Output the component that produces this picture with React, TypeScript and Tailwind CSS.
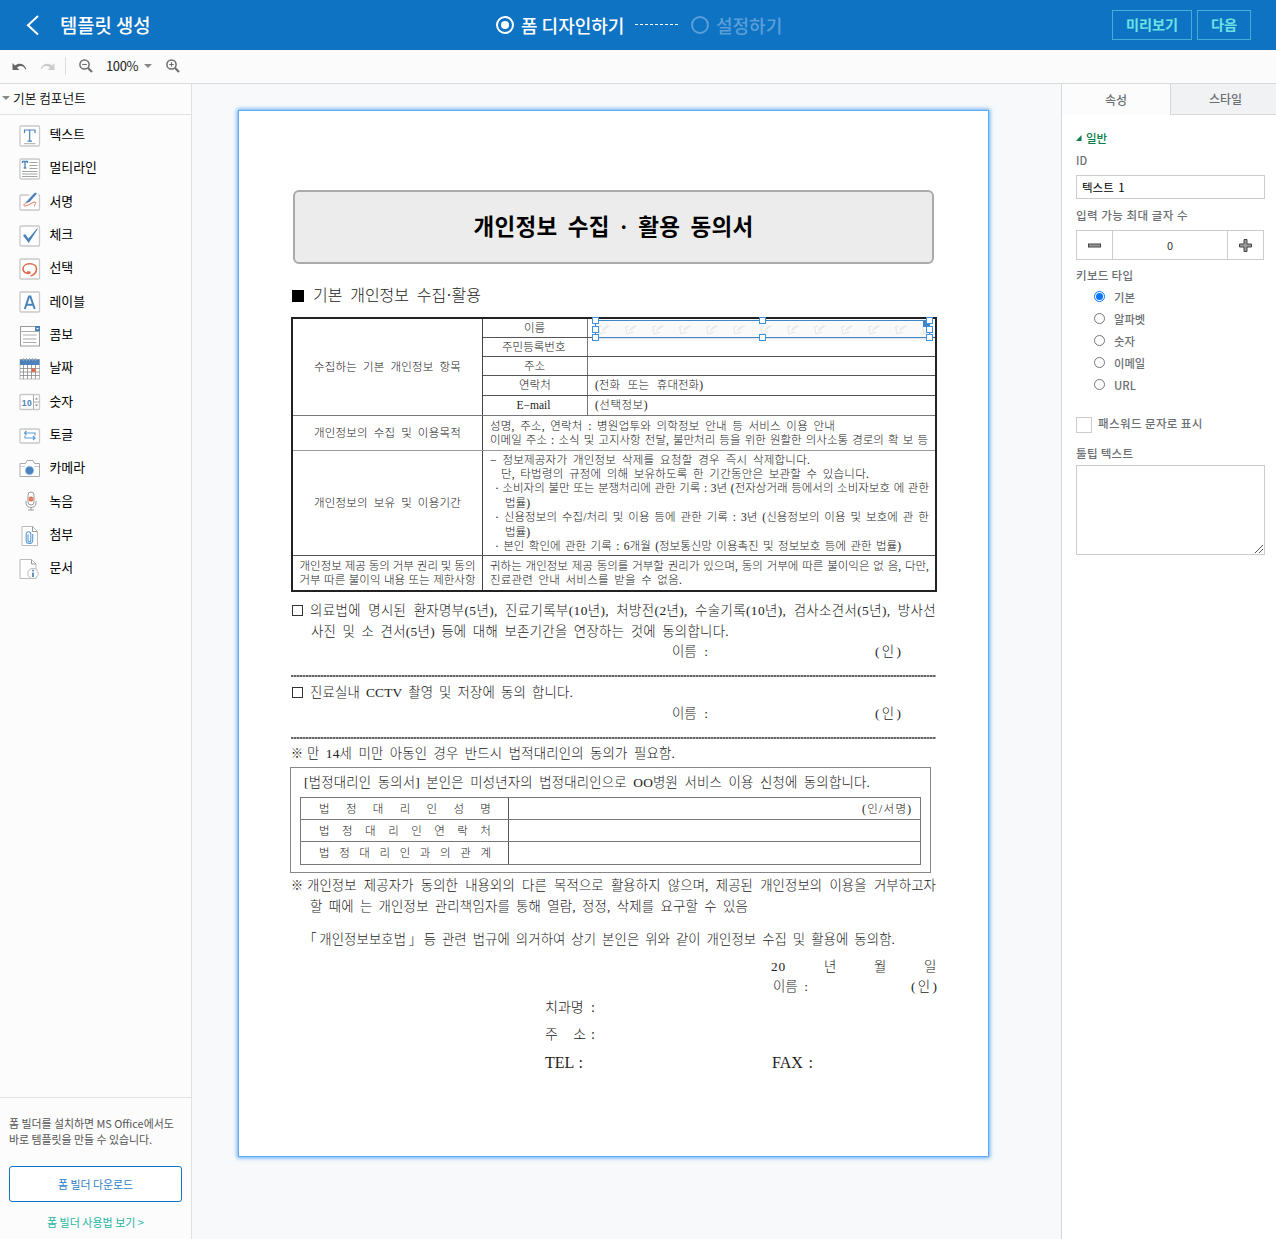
import type { ReactNode } from "react";

const BLUE = "#4a82bb";
const RED = "#df6b4d";
const GRAY = "#c9c9c9";

function Frame({ y = 1, h = 20 }: { y?: number; h?: number }) {
  return <rect x="1" y={y} width="19.5" height={h} rx="1" fill="#fff" stroke={GRAY} strokeWidth="1.3" />;
}

const components: { name: string; icon: ReactNode }[] = [
  {
    name: "텍스트",
    icon: (
      <>
        <Frame />
        <path d="M5.500 8V5h10.500v3M10.700 5v11M8.500 16.200h4.500" fill="none" stroke={BLUE} strokeWidth="1.200" />
        <path d="M5 18.700h11.500" stroke="#aaa" />
      </>
    ),
  },
  {
    name: "멀티라인",
    icon: (
      <>
        <Frame />
        <path d="M3.500 5V3.500h5V5M6 3.500v6.500M4.700 10h2.600" fill="none" stroke={BLUE} strokeWidth="1.300" />
        <path d="M10.500 4.500h8M10.500 7.500h8M10.500 10.500h8M3 13.500h15.500M3 16h15.500M3 18.500h15.500" stroke="#999" strokeWidth="0.900" />
      </>
    ),
  },
  {
    name: "서명",
    icon: (
      <>
        <Frame y={4} h={15} />
        <path d="M10 4h9" stroke="#fcfcfc" strokeWidth="1.600" />
        <path d="M7.500 10.500 16 1.500 18 2.500 11 10.500 6.500 12.500Z" fill={BLUE} />
        <path d="M8 11.500c-3 1-4 3-2.500 3.500 3 .500 8-4 10.500-4 2.500.500-2 3.500 0 4.500" fill="none" stroke={RED} strokeWidth="0.900" />
      </>
    ),
  },
  {
    name: "체크",
    icon: (
      <>
        <Frame />
        <path d="M4 10.500 6 9l3.500 4.500L18 3.500h1L9.700 18Z" fill={BLUE} />
      </>
    ),
  },
  {
    name: "선택",
    icon: (
      <>
        <Frame />
        <path d="M9.500 15.500C5.800 15.200 4 13 4 10.800 4 7.500 7.500 5.800 11 5.800s6.500 2 6.500 5.200c0 3-2.500 5.800-6 7M9.500 15.500c1.500 0 1.800-1 .800-1.500H8" fill="none" stroke={RED} strokeWidth="1.600" />
      </>
    ),
  },
  {
    name: "레이블",
    icon: (
      <>
        <Frame />
        <path d="M5.800 18 10 5.500h1.400L15.700 18M7.300 13.700h7" fill="none" stroke={BLUE} strokeWidth="2" />
      </>
    ),
  },
  {
    name: "콤보",
    icon: (
      <>
        <rect x="1.500" y="1.500" width="19" height="19.500" fill="#fff" stroke="#999" />
        <path d="M1.500 6.500H20M4 10h13.500M4 14h13.500M4 17.500h13.500" stroke="#aaa" />
        <rect x="16" y="1" width="5" height="5" fill={BLUE} />
        <path d="m17 3 1.500 1.500L20 3" fill="#fff" />
      </>
    ),
  },
  {
    name: "날짜",
    icon: (
      <>
        <rect x="1" y="1.500" width="19.500" height="19.500" fill="#fff" stroke="#bbb" />
        <rect x="1" y="1.500" width="19.500" height="5.500" fill={BLUE} />
        <path d="M4.500 0v3M7.500 0v3M10.500 0v3M13.500 0v3M16.500 0v3" stroke="#aaa" strokeWidth="0.800" />
        <path d="M1 10.500h19.500M1 14h19.500M1 17.500h19.500M4.500 7v14M8.500 7v14M12.500 7v14M16.500 7v14" stroke="#888" strokeWidth="0.800" />
        <rect x="12.500" y="10.500" width="4" height="3.500" fill={RED} />
      </>
    ),
  },
  {
    name: "숫자",
    icon: (
      <>
        <Frame y={3.500} h={15} />
        <path d="M14.500 4v14M14.500 11H20" stroke="#aaa" />
        <text x="2.800" y="14.800" className="font-['Liberation_Sans',sans-serif] text-[8.500px] font-bold tracking-[0.400px]" fill={BLUE}>
          10
        </text>
        <path d="m16 8.500 1.500-2 1.500 2ZM16 13.500l1.500 2 1.500-2Z" fill="#888" />
      </>
    ),
  },
  {
    name: "토글",
    icon: (
      <>
        <Frame y={4} h={14} />
        <path d="M7.500 6 5.500 8l2 2M5.500 8H16v2.500M14 11l2 2-2 2M16 13H6v-2.500" fill="none" stroke="#5b9bd5" strokeWidth="1.100" />
      </>
    ),
  },
  {
    name: "카메라",
    icon: (
      <>
        <path d="M1 5.500h5.500L8 2.500h6l1.500 3h5V18.500H1Z" fill="#fff" stroke="#aaa" />
        <path d="M2 8.500h4M15 8.500h5" stroke="#ccc" />
        <circle cx="10.500" cy="12.500" r="4.200" fill={BLUE} stroke="#9fc3e6" />
      </>
    ),
  },
  {
    name: "녹음",
    icon: (
      <>
        <rect x="9" y="1" width="6" height="13" rx="3" fill="#fff" stroke="#999" />
        <path d="M7 10v2c0 6 10 6 10 0v-2M12 16v3M9 19h6" fill="none" stroke="#999" />
        <circle cx="12" cy="8" r="2.500" fill={RED} />
        <path d="M9.500 8h5" stroke="#f4b7a6" strokeWidth="0.700" />
      </>
    ),
  },
  {
    name: "첨부",
    icon: (
      <>
        <path d="M3 1.500h10.500l5 5V20.500H3Z" fill="#fff" stroke="#bbb" />
        <path d="M13.500 1.500v5h5" fill="none" stroke="#999" />
        <path d="M9 9.500v6c0 1.800 2.800 1.800 2.800 0V9c0-3-4.600-3-4.600 0v6.500c0 4 6.500 4 6.500 0V9" fill="none" stroke="#5b9bd5" strokeWidth="1.100" />
      </>
    ),
  },
  {
    name: "문서",
    icon: (
      <>
        <path d="M1 1.500h11.500l4.500 4.500V20.500H1Z" fill="#fff" stroke="#bbb" />
        <path d="M12.500 1.500V6H17" fill="none" stroke="#999" />
        <circle cx="14" cy="15.500" r="5.200" fill="#fff" stroke="#bbb" />
        <path d="M14 14.500v4.500" stroke={BLUE} strokeWidth="1.700" />
        <circle cx="14" cy="12.500" r="0.900" fill={BLUE} />
      </>
    ),
  },
];

/* One typeset line, spread over the width given in className. */
function L({ className, children }: { className: string; children: ReactNode }) {
  return (
    <div className={"shrink-0 whitespace-nowrap text-justify [text-align-last:justify] " + className}>{children}</div>
  );
}

function Chars({ text }: { text: string }) {
  return (
    <div className="flex w-[172px] justify-between">
      {text.split("").map((c, i) => (
        <span key={i}>{c}</span>
      ))}
    </div>
  );
}

function TopBar() {
  return (
    <header className="flex h-[50px] shrink-0 items-center bg-[#0f73c4] pb-px text-white">
      <div className="flex w-[496px] items-center">
        <svg className="ml-[26px]" width="14" height="20" viewBox="0 0 14 20">
          <path d="M12 1 2 10.200 12 19.500" fill="none" stroke="#fff" strokeWidth="2" />
        </svg>
        <h1 className="ml-5 text-[18.800px] leading-6 font-medium">템플릿 생성</h1>
      </div>
      <div className="flex items-center text-[18px] leading-6 font-medium">
        <span className="mt-px flex size-[18px] items-center justify-center rounded-full border-2 border-white">
          <span className="size-2 rounded-full bg-white" />
        </span>
        <span className="ml-[7px] w-[105px] whitespace-nowrap">폼 디자인하기</span>
        <span className="ml-[9px] h-px w-[45px] bg-[repeating-linear-gradient(90deg,#fff_0_3px,transparent_3px_5px)]" />
        <span className="mt-px ml-[11px] size-[18px] rounded-full border-2 border-[#5b9fd8]" />
        <span className="ml-[7px] text-[#5b9fd8]">설정하기</span>
      </div>
      <div className="mr-[25px] ml-auto flex gap-[5px] text-[14.200px] font-bold text-[#6be3e4]">
        <button className="h-[30px] w-20 border border-[#45aed6]">미리보기</button>
        <button className="h-[30px] w-[54px] border border-[#45aed6]">다음</button>
      </div>
    </header>
  );
}

function Magnifier({ plus }: { plus?: boolean }) {
  return (
    <svg width="14" height="14" viewBox="0 0 14 14" fill="none" stroke="#6d6d6d">
      <circle cx="5.500" cy="5.500" r="4.600" strokeWidth="1.500" />
      <path d="m9 9 4 4" strokeWidth="2.200" />
      <path d={plus ? "M3.200 5.500h4.600M5.500 3.200v4.600" : "M3.200 5.500h4.600"} strokeWidth="1.100" />
    </svg>
  );
}

function UndoArrow({ className }: { className: string }) {
  return (
    <svg className={className} width="15" height="9" viewBox="0 0 15 9">
      <path d="M.500 1v7h7L5 5.700C8 3 11.500 3.500 13.500 7.500l.800-.500C12.500 1.500 7 .500 3 3.500Z" fill="currentColor" />
    </svg>
  );
}

function ToolBar() {
  return (
    <div className="flex h-[34px] shrink-0 items-center border-b border-[#d9dbdd] bg-[#fbfbfb] pb-px">
      <UndoArrow className="ml-3 text-[#666]" />
      <UndoArrow className="ml-[13px] -scale-x-100 text-[#ccc]" />
      <span className="ml-[10px] h-[18px] w-px bg-[#dcdcdc]" />
      <span className="ml-[13px]"><Magnifier /></span>
      <span className="ml-[13px] w-[33px] text-[13px] tracking-[-0.400px] text-[#222]">100%</span>
      <span className="ml-[5px] border-x-4 border-t-4 border-x-transparent border-t-[#888]" />
      <span className="ml-[14px]"><Magnifier plus /></span>
    </div>
  );
}

function SideBar() {
  return (
    <aside className="flex w-48 shrink-0 flex-col border-r border-[#dfe1e3] bg-[#fcfcfc]">
      <div className="flex h-[31px] items-center border-b border-[#dfe1e3] pb-0.5 pl-[2px] text-[12.700px] font-[350] text-black">
        <span className="mr-[3px] border-x-4 border-t-4 border-x-transparent border-t-[#888]" />
        기본 컴포넌트
      </div>
      <ul className="mt-[3px]">
        {components.map((c) => (
          <li key={c.name} className="flex h-[33.340px] items-center pl-[18.500px]">
            <svg className="mt-[2px] shrink-0" width="22" height="22" viewBox="0 0 22 22">{c.icon}</svg>
            <span className="mb-px ml-[9px] text-[12.900px] leading-5 text-black">{c.name}</span>
          </li>
        ))}
      </ul>
      <div className="mt-auto h-[142px] border-t border-[#dfe1e3] px-[9px] pt-[17px] text-[11px]">
        <p className="text-[10.900px] leading-4 whitespace-nowrap text-[#555]">
          폼 빌더를 설치하면 MS Office에서도
          <br />
          바로 템플릿을 만들 수 있습니다.
        </p>
        <button className="mt-[19px] block h-9 w-[173px] rounded-[3px] border border-[#0f73c4] bg-white text-[10.900px] text-[#2e80c8]">
          폼 빌더 다운로드
        </button>
        <a className="mt-[12px] block text-center leading-4 text-[#1fb5a3]">폼 빌더 사용법 보기 &gt;</a>
      </div>
    </aside>
  );
}

const handlePlaces = [
  "-left-[4px] -top-[4px]",
  "left-[163px] -top-[4px]",
  "-right-[4px] -top-[4px]",
  "-left-[4px] top-[5px]",
  "-right-[4px] top-[5px]",
  "-left-[4px] -bottom-[4px]",
  "left-[163px] -bottom-[4px]",
  "-right-[4px] -bottom-[4px]",
];

function SelectedField() {
  return (
    <div className="absolute top-[1px] left-[7px] h-[18px] w-[335px] border border-[#3e88c8] bg-[#fafafa] shadow-sm">
      <div className="flex h-full gap-[13px] overflow-hidden pl-[1px]">
        {Array.from({ length: 13 }, (_, i) => (
          <svg key={i} className="mt-px shrink-0" width="14" height="14" viewBox="0 0 14 14" fill="none" stroke="#e4e4e4">
            <path d="M5 4 1.500 5 3 12l6-2M5 9l8-5.500M6 7l5-3.500" />
          </svg>
        ))}
      </div>
      <span className="absolute top-0 right-0 size-[6px] bg-[#3e88c8]" />
      {handlePlaces.map((p) => (
        <span key={p} className={"absolute size-[7px] border border-[#3e93dc] bg-white " + p} />
      ))}
    </div>
  );
}

const personalRows: { label: string; width: string; height: string; value?: ReactNode }[] = [
  { label: "이름", width: "w-[22px]", height: "h-[18px]", value: <SelectedField /> },
  { label: "주민등록번호", width: "w-[66px]", height: "h-[19px]" },
  { label: "주소", width: "w-[22px]", height: "h-[19px]" },
  { label: "연락처", width: "w-[32px]", height: "h-[20px]", value: <L className="w-[108px]">(전화 또는 휴대전화)</L> },
  { label: "E−mail", width: "w-[37px]", height: "h-[20px]", value: <L className="w-[54px] tracking-[0.500px]">(선택정보)</L> },
];

function ItemTable() {
  const head = "flex w-[190px] shrink-0 flex-col items-center justify-center border-r border-[#444]";
  const body = "flex flex-1 flex-col justify-center pl-[7px]";
  return (
    <div className="h-[275px] w-[646px] border-2 border-[#222] text-[11.500px] leading-[14.400px]">
      <div className="flex h-[96px]">
        <div className={head}>
          <L className="w-[147px] tracking-[0.200px]">수집하는 기본 개인정보 항목</L>
        </div>
        <div className="flex-1">
          {personalRows.map((r, i) => (
            <div key={r.label} className={"flex " + r.height + (i > 0 ? " border-t border-[#555]" : "")}>
              <div className="flex w-[105px] items-center justify-center border-r border-[#777]">
                <L className={r.width}>{r.label}</L>
              </div>
              <div className="relative flex flex-1 items-center pl-[7px]">{r.value}</div>
            </div>
          ))}
        </div>
      </div>
      <div className="flex h-[35px] border-t border-[#777]">
        <div className={head}>
          <L className="w-[147px] tracking-[0.200px]">개인정보의 수집 및 이용목적</L>
        </div>
        <div className={body}>
          <L className="w-[345px] tracking-[0.200px]">성명, 주소, 연락처 : 병원업투와 의학정보 안내 등 서비스 이용 안내</L>
          <L className="w-[438px]">이메일 주소 : 소식 및 고지사항 전달, 불만처리 등을 위한 원활한 의사소통 경로의 확 보 등</L>
        </div>
      </div>
      <div className="flex h-[105px] border-t border-[#999]">
        <div className={head}>
          <L className="w-[147px] tracking-[0.200px]">개인정보의 보유 및 이용기간</L>
        </div>
        <div className={body}>
          <L className="w-[320px] tracking-[0.200px]">− 정보제공자가 개인정보 삭제를 요청할 경우 즉시 삭제합니다.</L>
          <L className="ml-[11px] w-[368px] tracking-[0.200px]">단, 타법령의 규정에 의해 보유하도록 한 기간동안은 보관할 수 있습니다.</L>
          <L className="ml-[5px] w-[434px]">· 소비자의 불만 또는 분쟁처리에 관한 기록 : 3년 (전자상거래 등에서의 소비자보호 에 관한</L>
          <L className="ml-[15px] w-[26px]">법률)</L>
          <L className="ml-[5px] w-[434px] tracking-[0.100px]">· 신용정보의 수집/처리 및 이용 등에 관한 기록 : 3년 (신용정보의 이용 및 보호에 관 한</L>
          <L className="ml-[15px] w-[26px]">법률)</L>
          <L className="ml-[5px] w-[406px]">· 본인 확인에 관한 기록 : 6개월 (정보통신망 이용촉진 및 정보보호 등에 관한 법률)</L>
        </div>
      </div>
      <div className="flex h-[35px] border-t border-[#555]">
        <div className={head}>
          <L className="w-[176px]">개인정보 제공 동의 거부 권리 및 동의</L>
          <L className="w-[176px]">거부 따른 불이익 내용 또는 제한사항</L>
        </div>
        <div className={body}>
          <L className="w-[439px]">귀하는 개인정보 제공 동의를 거부할 권리가 있으며, 동의 거부에 따른 불이익은 없 음, 다만,</L>
          <L className="w-[192px] tracking-[0.200px]">진료관련 안내 서비스를 받을 수 없음.</L>
        </div>
      </div>
    </div>
  );
}

function Seal({ className }: { className: string }) {
  return (
    <span className={"flex w-[26px] shrink-0 justify-between " + className}>
      <span>(</span>
      <span>인</span>
      <span>)</span>
    </span>
  );
}

function NameSign() {
  return (
    <div className="flex h-5 items-center pt-px pl-[381px]">
      <L className="w-[36px]">이름 :</L>
      <Seal className="ml-[167px]" />
    </div>
  );
}

function DottedRule({ className }: { className: string }) {
  return (
    <div className={"h-0.5 w-[645px] bg-[repeating-linear-gradient(90deg,#666_0_2px,#aaa_2px_3px)] " + className} />
  );
}

function Guardian() {
  return (
    <div className="mt-[3px] -ml-px h-[106px] w-[641px] border border-[#888] px-[9px]">
      <div className="flex h-[29px] items-center pl-[4px]">
        <L className="w-[566px] tracking-[0.200px]">[법정대리인 동의서] 본인은 미성년자의 법정대리인으로 OO병원 서비스 이용 신청에 동의합니다.</L>
      </div>
      <div className="w-[621px] divide-y divide-[#777] border border-[#777] text-[11.500px]">
        {["법정대리인성명", "법정대리인연락처", "법정대리인과의관계"].map((t, i) => (
          <div key={t} className="flex h-[22px] items-center">
            <div className="flex h-full w-[208px] items-center border-r border-[#555] pl-[18px]">
              <Chars text={t} />
            </div>
            {i === 0 && <L className="mr-[6px] ml-auto w-[52px] tracking-[1.300px]">(인/서명)</L>}
          </div>
        ))}
      </div>
    </div>
  );
}

function FormPage() {
  return (
    <article className="ml-[46px] h-[1047px] w-[751px] border border-[#60abf8] bg-white pl-[52px] font-['Liberation_Serif','Noto_Sans_CJK_KR',sans-serif] text-[13.400px] leading-5 font-light text-[#222] shadow-[0_0_4px_1px_#60abf8]">
      <div className="mt-[79px] ml-[2px] flex h-[74px] w-[641px] items-center justify-center rounded-md border-2 border-[#aaa] bg-[#ececec] pt-0.5 text-[22.500px] font-bold text-black">
        <L className="w-[280px] tracking-[0.300px]">개인정보 수집 · 활용 동의서</L>
      </div>
      <div className="mt-[21px] flex h-[22px] items-center text-[16px]">
        <span className="ml-px size-3 bg-black" />
        <L className="ml-[9px] w-[168px]">기본 개인정보 수집·활용</L>
      </div>
      <div className="mt-[10px]">
        <ItemTable />
      </div>
      <div className="mt-[8px] flex h-[21px] items-center">
        <span className="ml-px size-[11px] border border-[#333]" />
        <L className="ml-[7px] w-[626px] tracking-[0.400px]">의료법에 명시된 환자명부(5년), 진료기록부(10년), 처방전(2년), 수술기록(10년), 검사소견서(5년), 방사선</L>
      </div>
      <L className="relative top-px ml-[20px] w-[418px] tracking-[0.300px]">사진 및 소 견서(5년) 등에 대해 보존기간을 연장하는 것에 동의합니다.</L>
      <NameSign />
      <DottedRule className="mt-[14px]" />
      <div className="mt-[5px] flex h-[21px] items-center">
        <span className="ml-px size-[11px] border border-[#333]" />
        <L className="ml-[7px] w-[263px] tracking-[0.200px]">진료실내 CCTV 촬영 및 저장에 동의 합니다.</L>
      </div>
      <NameSign />
      <DottedRule className="mt-[14px]" />
      <div className="mt-[5px] flex">
        <span className="w-4 text-[12px]">※</span>
        <L className="w-[368px] tracking-[0.200px]">만 14세 미만 아동인 경우 반드시 법적대리인의 동의가 필요함.</L>
      </div>
      <Guardian />
      <div className="mt-[3px] flex">
        <span className="w-4 text-[12px]">※</span>
        <L className="w-[629px] tracking-[0.100px]">개인정보 제공자가 동의한 내용외의 다른 목적으로 활용하지 않으며, 제공된 개인정보의 이용을 거부하고자</L>
      </div>
      <L className="mt-px ml-[19px] w-[438px] tracking-[0.200px]">할 때에 는 개인정보 관리책임자를 통해 열람, 정정, 삭제를 요구할 수 있음</L>
      <L className="mt-[13px] ml-[19px] w-[585px] tracking-[0.100px] [font-feature-settings:'halt']">「개인정보보호법」 등 관련 법규에 의거하여 상기 본인은 위와 같이 개인정보 수집 및 활용에 동의함.</L>
      <div className="mt-[7px] ml-[480px] flex">
        <span className="w-[53px] tracking-[0.800px]">20</span>
        <span className="w-[50px]">년</span>
        <span className="w-[50px]">월</span>
        <span>일</span>
      </div>
      <div className="ml-[482px] flex">
        <L className="w-[35px]">이름 :</L>
        <Seal className="ml-[103px]" />
      </div>
      <div className="ml-[254px] pt-px text-[14px]">
        <L className="w-[50px]">치과명 :</L>
        <L className="mt-[7px] w-[50px]">주 &nbsp; 소 :</L>
        <div className="mt-[8px] flex text-[16px]">
          <L className="w-[38px]">TEL :</L>
          <L className="ml-[189px] w-[41px]">FAX :</L>
        </div>
      </div>
    </article>
  );
}

function Stepper() {
  return (
    <div className="mt-[7px] flex h-[30px] w-[188px] divide-x divide-[#ccc] border border-[#ccc] bg-white">
      <span className="flex w-9 items-center justify-center">
        <svg width="13" height="5" viewBox="0 0 13 5"><rect x=".5" y="1" width="12" height="3" fill="#999" stroke="#444" /></svg>
      </span>
      <span className="flex flex-1 items-center justify-center text-[11px] font-normal text-[#333]">0</span>
      <span className="flex w-[35px] items-center justify-center">
        <svg width="13" height="13" viewBox="0 0 13 13">
          <path d="M5 .5h3V5h4.500v3H8v4.500H5V8H.5V5H5Z" fill="#999" stroke="#444" />
        </svg>
      </span>
    </div>
  );
}

function PropertyPanel() {
  return (
    <aside className="w-[215px] shrink-0 border-l border-[#d5d7da] bg-white text-[11.500px] leading-4 font-medium text-[#6b6f73]">
      <div className="flex h-[31px] text-[12px]">
        <div className="flex w-[108px] items-center justify-center bg-[#fcfcfc]">속성</div>
        <div className="flex flex-1 items-center justify-center border-b border-l border-[#d5d7da] bg-[#f1f2f4] pl-1">스타일</div>
      </div>
      <div className="px-[14px] pt-[15px]">
        <h2 className="flex items-center text-[#0b7d4b]">
          <svg className="mr-[4px]" width="6" height="6" viewBox="0 0 6 6"><path d="M5.500 0v6H0Z" fill="currentColor" /></svg>
          일반
        </h2>
        <div className="mt-[6px] text-[11px]">ID</div>
        <div className="mt-[7px] flex h-6 w-[189px] items-center border border-[#ccc] bg-white pb-px pl-[5px] text-[11.500px] font-normal text-black [word-spacing:2px]">텍스트 1</div>
        <div className="mt-[8px] whitespace-nowrap tracking-[0.500px]">입력 가능 최대 글자 수</div>
        <Stepper />
        <div className="mt-[7px] tracking-[0.300px]">키보드 타입</div>
        <div className="mt-[3px] ml-[18px]">
          {["기본", "알파벳", "숫자", "이메일", "URL"].map((t, i) => (
            <label key={t} className="flex h-[22px] items-center">
              <span
                className={
                  "mb-0.5 flex size-[11px] items-center justify-center rounded-full border " +
                  (i === 0 ? "border-[#0a75ff]" : "border-[#767676]")
                }
              >
                {i === 0 && <span className="size-[7px] rounded-full bg-[#0a75ff]" />}
              </span>
              <span className="ml-[9px] text-[11.300px]">{t}</span>
            </label>
          ))}
        </div>
        <div className="mt-[19px] flex">
          <span className="mt-[2px] size-4 border border-[#ccc]" />
          <span className="ml-[6px] tracking-[0.400px]">패스워드 문자로 표시</span>
        </div>
        <div className="mt-[12px] tracking-[0.300px]">툴팁 텍스트</div>
        <div className="mt-[4px] flex h-[90px] w-[189px] items-end justify-end border border-[#ccc]">
          <svg width="10" height="10" viewBox="0 0 10 10"><path d="m1 9 8-8M5 9l4-4" stroke="#555" /></svg>
        </div>
      </div>
    </aside>
  );
}

export default function App() {
  return (
    <div className="flex h-[1239px] w-[1276px] flex-col overflow-hidden bg-[#f7f9fb] font-['Noto_Sans_CJK_KR',sans-serif]">
      <TopBar />
      <ToolBar />
      <div className="flex min-h-0 flex-1">
        <SideBar />
        <main className="min-w-0 flex-1 pt-[26px]">
          <FormPage />
        </main>
        <PropertyPanel />
      </div>
    </div>
  );
}
